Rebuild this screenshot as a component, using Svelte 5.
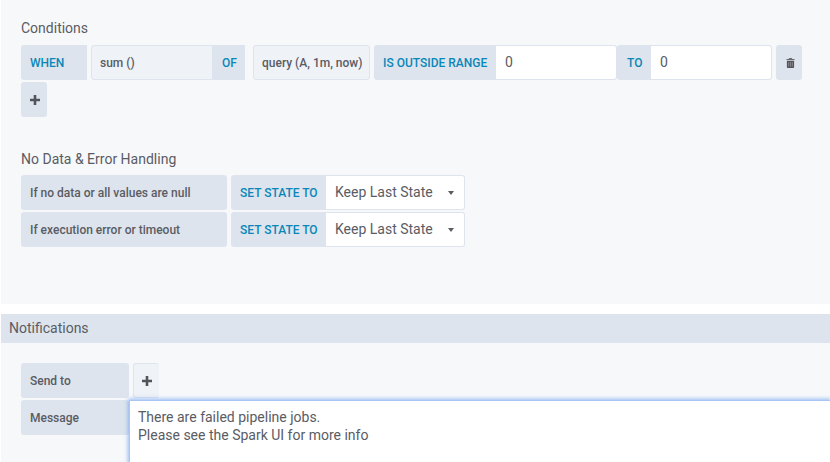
<script>
	const handlers = ['If no data or all values are null', 'If execution error or timeout'];
</script>

<div class="page">
	<section class="panel">
		<h5 class="title conditions-title">Conditions</h5>
		<div class="row">
			<span class="label keyword when">WHEN</span>
			<span class="part reducer">sum ()</span>
			<span class="label keyword of">OF</span>
			<span class="part query">query (A, 1m, now)</span>
			<span class="label keyword range">IS OUTSIDE RANGE</span>
			<input class="input" value="0" />
			<span class="label keyword to">TO</span>
			<input class="input" value="0" />
			<button class="label icon-btn trash" aria-label="Remove">
				<svg width="9" height="10" viewBox="0 0 10 11">
					<path d="M3.5 0h3l.5 1h2.5v1.2H.5V1H3z" fill="#6e6a70" />
					<path d="M1 3h8v7a1 1 0 0 1-1 1H2a1 1 0 0 1-1-1z" fill="#555259" />
					<path d="M3 4.5v5M5 4.5v5M7 4.5v5" stroke="#a8a8b0" stroke-width=".7" />
				</svg>
			</button>
		</div>
		<div class="row">
			<button class="label icon-btn" aria-label="Add condition">
				<svg width="10" height="10" viewBox="0 0 10 10"><path d="M3.7 0h2.6v3.7H10v2.6H6.3V10H3.7V6.3H0V3.7h3.7z" fill="#52545c" /></svg>
			</button>
		</div>

		<h5 class="title nodata-title">No Data &amp; Error Handling</h5>
		{#each handlers as text}
			<div class="row">
				<span class="label handler">{text}</span>
				<span class="label keyword state">SET STATE TO</span>
				<div class="select">
					<span>Keep Last State</span>
					<i class="caret"></i>
				</div>
			</div>
		{/each}
	</section>

	<h5 class="section-head">Notifications</h5>

	<section class="notify">
		<div class="row">
			<span class="label name">Send to</span>
			<button class="label icon-btn add-target" aria-label="Add notification">
				<svg width="10" height="10" viewBox="0 0 10 10"><path d="M3.7 0h2.6v3.7H10v2.6H6.3V10H3.7V6.3H0V3.7h3.7z" fill="#52545c" /></svg>
			</button>
		</div>
		<div class="row message-row">
			<span class="label name">Message</span>
			<div class="message">There are failed pipeline jobs.<br />Please see the Spark UI for more info</div>
		</div>
	</section>
</div>

<style>
	:global(body) {
		background: #fff;
		font-family: Roboto, "Liberation Sans", sans-serif;
		overflow: hidden;
	}

	.page {
		width: 830px;
		height: 462px;
		overflow: hidden;
		background: #fff;
	}

	.panel {
		margin-left: 1px;
		height: 304px;
		box-sizing: border-box;
		padding: 20px 0 0 20px;
		background: #f7f8fa;
	}

	.title {
		margin: 0;
		font-size: 14px;
		font-weight: 400;
		line-height: 17px;
		color: #5a5c64;
	}

	.conditions-title {
		margin-bottom: 8px;
	}

	.nodata-title {
		margin: 34px 0 7px;
	}

	.row {
		display: flex;
		margin-bottom: 2px;
		height: 35px;
	}

	.label {
		box-sizing: border-box;
		display: flex;
		align-items: center;
		flex: none;
		height: 35px;
		padding: 0 9px;
		background: #dde4ed;
		border: 0;
		border-radius: 3px;
		font-family: inherit;
		font-size: 12px;
		font-weight: 500;
		color: #5a5c64;
		white-space: nowrap;
	}

	.keyword {
		color: #0a87b8;
	}

	.when {
		width: 66px;
		margin-right: 4px;
		border-radius: 3px 0 0 3px;
	}

	.part {
		box-sizing: border-box;
		display: flex;
		align-items: center;
		flex: none;
		height: 35px;
		padding: 0 8px;
		background: #eff2f7;
		border: 1px solid #dde4ed;
		border-radius: 3px;
		font-size: 12px;
		font-weight: 500;
		color: #5a5c64;
		white-space: nowrap;
	}

	.reducer {
		width: 122px;
		border-radius: 3px 0 0 3px;
	}

	.of {
		width: 32px;
		margin-right: 8px;
		border-radius: 0;
	}

	.query {
		width: 117px;
		margin-right: 4px;
	}

	.range {
		width: 122px;
		border-radius: 3px 0 0 3px;
	}

	.input {
		box-sizing: border-box;
		width: 121px;
		height: 35px;
		padding: 0 9px 2px;
		background: #fff;
		border: 1px solid #dde4ed;
		border-left: 0;
		border-radius: 0 3px 3px 0;
		outline: none;
		font-family: inherit;
		font-size: 14px;
		color: #5a5c64;
	}

	.to {
		width: 34px;
		border-radius: 3px 0 0 3px;
		padding-left: 10px;
	}

	.icon-btn {
		justify-content: center;
		width: 26px;
		padding: 0 0 0 2px;
	}

	.trash {
		margin-left: 4px;
	}

	.handler {
		width: 206px;
		margin-right: 4px;
	}

	.state {
		width: 95px;
		border-radius: 3px 0 0 3px;
	}

	.select {
		box-sizing: border-box;
		display: flex;
		align-items: center;
		justify-content: space-between;
		width: 139px;
		height: 35px;
		padding: 0 10px 2px 9px;
		background: #fff;
		border: 1px solid #dde4ed;
		border-left: 0;
		border-radius: 0 3px 3px 0;
		font-size: 14px;
		color: #5a5c64;
	}

	.caret {
		width: 0;
		height: 0;
		margin-top: 2px;
		border: 3.5px solid transparent;
		border-top: 4px solid #5a5c64;
		border-bottom: 0;
	}

	.section-head {
		box-sizing: border-box;
		margin: 10px 0 0 1px;
		height: 29px;
		padding: 0 8px;
		line-height: 28px;
		background: #dde4ed;
		font-size: 14px;
		font-weight: 400;
		color: #5a5c64;
	}

	.notify {
		margin-left: 1px;
		height: 119px;
		box-sizing: border-box;
		padding: 20px 0 0 20px;
		background: #f7f8fa;
	}

	.name {
		width: 108px;
	}

	.add-target {
		margin-left: 4px;
		padding: 0;
		background: #eff2f7;
		border: 1px solid #dde4ed;
		border-right: 0;
	}

	.message {
		box-sizing: border-box;
		flex: 1;
		height: 80px;
		padding: 7px 8px;
		background: #fff;
		border-top: 1px solid #a9c6f5;
		border-left: 1px solid #a9c6f5;
		box-shadow: 0 0 4px 1px rgba(82, 144, 240, 0.6);
		font-size: 14px;
		line-height: 18px;
		color: #5a5c64;
	}
</style>
